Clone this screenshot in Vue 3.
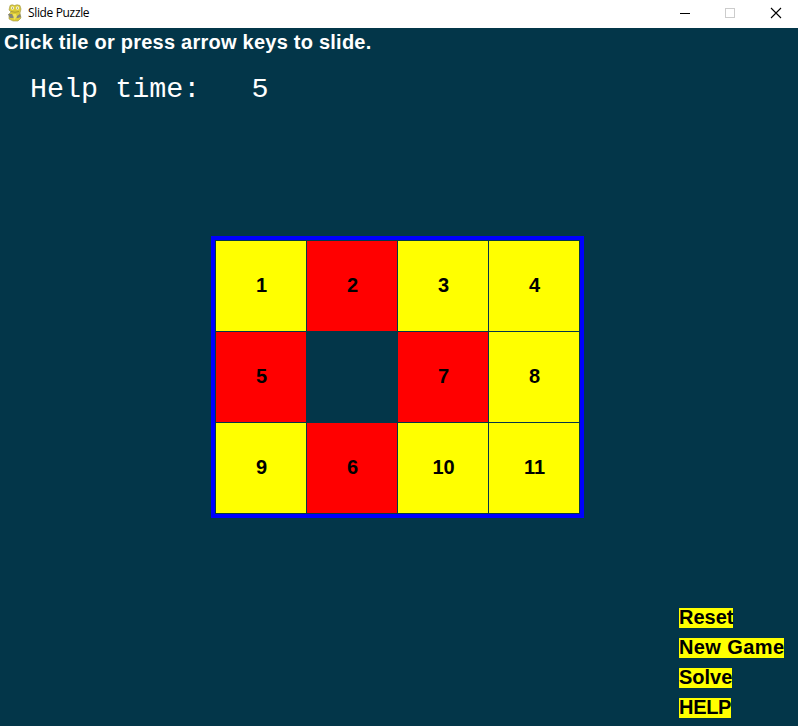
<script setup>
const tiles = [1, 2, 3, 4, 5, null, 7, 8, 9, 6, 10, 11]
const moved = [2, 5, 6, 7]
const timer = 'Help time:' + ' '.repeat(3) + '5'
const actions = [
  { label: 'Reset', kind: 'reset' },
  { label: 'New Game', kind: 'new-game' },
  { label: 'Solve', kind: 'solve' },
  { label: 'HELP', kind: 'help' },
]
</script>

<template>
  <div class="window">
    <header class="titlebar">
      <svg class="logo" width="16" height="18" viewBox="0 0 16 18">
        <path d="M3 1.5 Q5 0 7.5 1.5 Q10 0 13 1.5 L14 5 L13 9 L14 14 L11 17 H6 L2 15 L2 10 L4 8 L2 6 Z" fill="#dccb36" stroke="#a0954a" stroke-width=".6" />
        <circle cx="5.5" cy="4" r="1.7" fill="#f5f3c8" />
        <circle cx="10.5" cy="4" r="1.7" fill="#f5f3c8" />
        <circle cx="5.5" cy="4" r=".6" fill="#62643c" />
        <circle cx="10.5" cy="4" r=".6" fill="#62643c" />
        <path d="M4 7.5 Q8 9 12 7.5" fill="none" stroke="#a09030" stroke-width=".8" />
        <path d="M1 10 L5 10 L6 12 L10 12 L13 10 L14 13 L11 14 L3 14 Z" fill="#85857a" />
        <path d="M6 10 L9 10 L10 13 L7 16 Z" fill="#eee35f" />
      </svg>
      <span class="title">Slide Puzzle</span>
      <svg class="controls" width="104" height="12" viewBox="0 0 104 12" fill="none">
        <path d="M0 6.5 H10" stroke="#000" />
        <rect x="45.5" y="1.5" width="9" height="9" stroke="#ccc" />
        <path d="M91 1 L101 11 M101 1 L91 11" stroke="#000" stroke-width="1.1" />
      </svg>
    </header>
    <main class="game">
      <p class="hint">Click tile or press arrow keys to slide.</p>
      <p class="timer">{{ timer }}</p>
      <div class="board">
        <div
          v-for="(tile, i) in tiles"
          :key="i"
          class="tile"
          :class="{ moved: moved.includes(tile), empty: tile === null }"
        >{{ tile }}</div>
      </div>
      <nav class="actions">
        <button v-for="a in actions" :key="a.kind" :class="a.kind">{{ a.label }}</button>
      </nav>
    </main>
  </div>
</template>

<style>
body {
  margin: 0;
}
</style>

<style scoped>
.window {
  display: flex;
  flex-direction: column;
  height: 726px;
  overflow: hidden;
  background: #033649;
  font-family: "Liberation Sans", sans-serif;
}
.titlebar {
  display: flex;
  align-items: center;
  flex: none;
  box-sizing: border-box;
  height: 28px;
  padding: 0 14px 3px 7px;
  background: #fff;
}
.title {
  margin-left: 5px;
  font: 12px/16px "Open Sans", sans-serif;
  letter-spacing: -0.35px;
  color: #000;
}
.controls {
  margin-left: auto;
}
.game {
  display: flex;
  flex-direction: column;
  flex: 1;
}
.hint {
  margin: 2px 0 0 4px;
  font-size: 20px;
  font-weight: bold;
  line-height: 24px;
  letter-spacing: 0.24px;
  color: #fff;
}
.timer {
  margin: 20px 0 0 30px;
  font: 28.4px/32px "Liberation Mono", monospace;
  white-space: pre;
  color: #fff;
}
.board {
  display: grid;
  grid-template-columns: repeat(4, 90px);
  grid-auto-rows: 90px;
  gap: 1px;
  width: 363px;
  margin: 130px 0 0 211px;
  padding: 1px;
  border: 4px solid #00f;
}
.tile {
  display: flex;
  align-items: center;
  justify-content: center;
  box-sizing: border-box;
  padding: 0 0 2px 1px;
  background: #ff0;
  font-size: 20px;
  font-weight: bold;
  color: #000;
}
.moved {
  background: #f00;
}
.empty {
  background: none;
}
.actions {
  display: flex;
  flex-direction: column;
  align-items: flex-start;
  gap: 10px;
  margin: auto 0 8px 679px;
}
button {
  height: 20px;
  padding: 0 0 2px;
  border: 0;
  background: #ff0;
  font: bold 20px/18px "Liberation Sans", sans-serif;
  color: #000;
  white-space: nowrap;
}
.new-game {
  letter-spacing: 0.4px;
}
.help {
  letter-spacing: -0.3px;
}
</style>
